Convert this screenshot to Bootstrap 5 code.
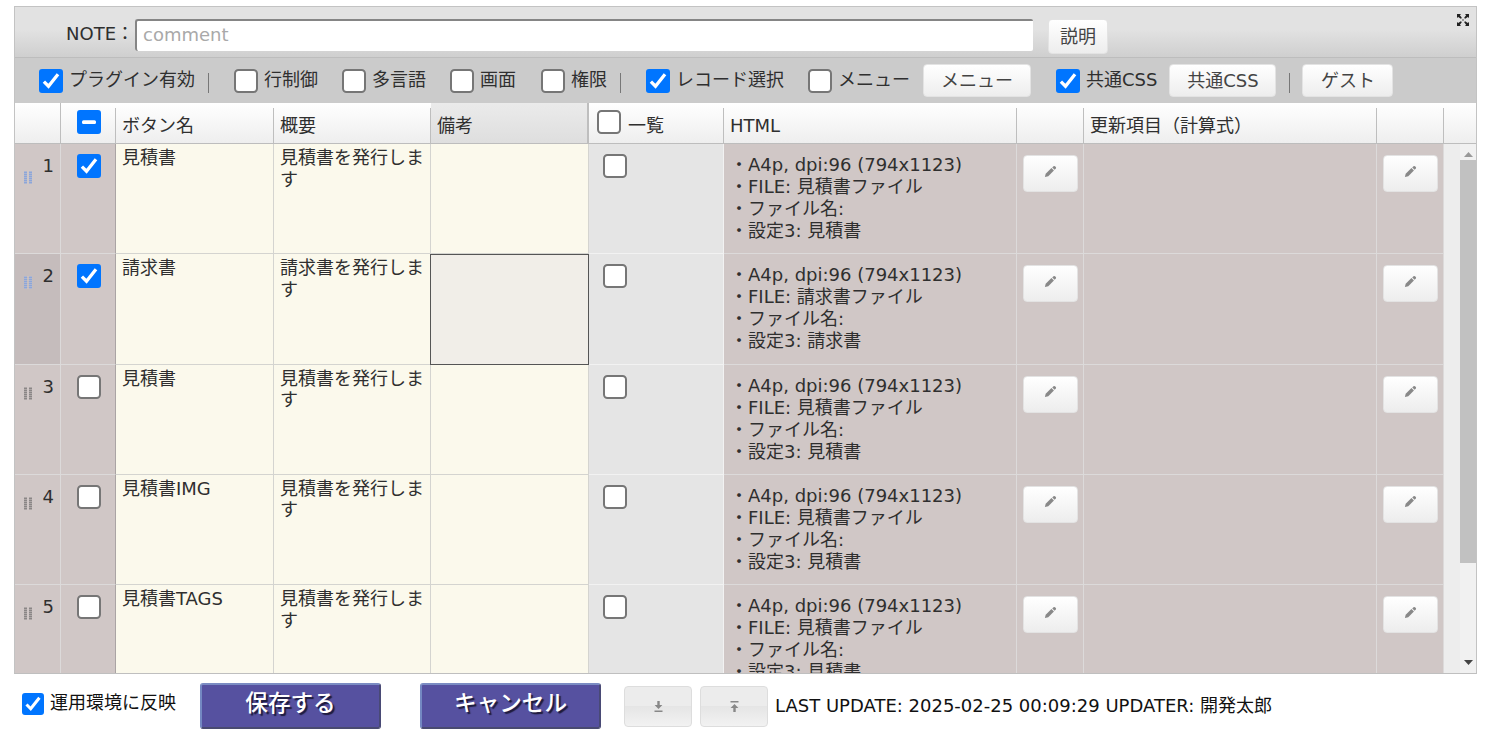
<!DOCTYPE html>
<html lang="ja">
<head>
<meta charset="utf-8">
<meta name="viewport" content="width=device-width, initial-scale=1">
<title>ボタン設定</title>
<link href="https://cdn.jsdelivr.net/npm/bootstrap@5.3.0/dist/css/bootstrap.min.css" rel="stylesheet">
<style>
  body { font-family: "DejaVu Sans", "Noto Sans CJK JP", sans-serif; font-size: 18px; line-height: 22px; color: #2f2f2f; overflow: hidden; background: #fff; }
  .panel { margin: 6px 0 0 14px; width: 1463px; height: 668px; border: 1px solid #c3c3c3; border-bottom: 2px solid #bfbfbf; }
  .panel, .panel * { box-sizing: border-box; }
  .note-bar { height: 51px; background: linear-gradient(#e2e2e2 0, #e2e2e2 45%, #cfcfcf 100%); border-bottom: 1px solid #bdbdbd; padding-left: 51px; }
  .note-label { width: 69px; white-space: nowrap; }
  .note-input { width: 898px; height: 32px; margin-top: 12px; padding: 0 6px 3px; font-size: 18px; border: 0; border-top: 2px solid #858585; border-left: 2px solid #858585; border-radius: 3px 2px 2px 3px; background: #fff; }
  .note-input::placeholder { color: #a9a9a9; opacity: 1; }
  .soft-btn { height: 33px; padding: 0; font-size: 18px; line-height: 22px; color: #444; border: 1px solid #e3e3e3; border-radius: 4px; background: linear-gradient(#fff, #ededed); }
  .expand-icon { position: absolute; right: 7px; top: 7px; }
  .opt-bar { height: 45px; padding-left: 24px; background: #cbcbcb; }
  .opt { display: flex; align-items: center; white-space: nowrap; }
  .opt span { margin-left: 6px; position: relative; top: -1px; }
  .rule { width: 1px; height: 20px; margin-top: 4px; background: #777; }
  .ms-13 { margin-left: 13px; } .ms-24 { margin-left: 24px; } .ms-25 { margin-left: 25px; } .ms-12 { margin-left: 12px; }
  .form-check-input { flex: none; margin: 0; width: 24px; height: 24px; border: 2px solid #767676; border-radius: 5px; background-color: #fff; display: block; }
  .form-check-input:checked[type=checkbox], .form-check-input:indeterminate[type=checkbox], .form-check-input.partial[type=checkbox] { background-color: #0075ff; border-color: #0075ff; border-radius: 3px; background-origin: border-box; background-size: 100% 100%; }
  .form-check-input:checked[type=checkbox] { background-image: url("data:image/svg+xml,%3csvg xmlns='http://www.w3.org/2000/svg' viewBox='0 0 24 24'%3e%3cpath d='M4.9 12.6l4.6 4.6L19 5.2' fill='none' stroke='%23fff' stroke-width='3.3'/%3e%3c/svg%3e"); }
  .form-check-input.partial[type=checkbox] { background-image: url("data:image/svg+xml,%3csvg xmlns='http://www.w3.org/2000/svg' viewBox='0 0 24 24'%3e%3crect x='5' y='10.2' width='14' height='3.8' rx='1.5' fill='%23fff'/%3e%3c/svg%3e"); }
  .cols { display: grid; grid-template-columns: 46px 55px 158px 157px 158px 135px 293px 67px 293px 67px; }
  .head { height: 41px; background: linear-gradient(#fff, #eee); border-bottom: 1px solid #bdbdbd; }
  .head > div { padding: 7px 0 0 6px; margin-top: 5px; border-right: 1px solid #bebebe; line-height: 22px; white-space: nowrap; height: 35px; }
  .head > .picked { margin-top: 0; padding-top: 12px; height: 40px; border-right: 2px solid #bebebe; background: linear-gradient(#ebebeb, #dedede); }
  .head > .lead-in { margin-top: 0; height: 40px; }
  .grid-body { height: 529px; overflow: hidden; }
  .rec { height: 110.25px; }
  .rec > div { border-right: 1px solid #dcdada; border-bottom: 1px solid #dcdada; background: #d0c7c6; }
  .rec > .txt { background: #fbf9ec; padding: 3px 5px 0 6px; line-height: 21.5px; border-color: #d4d4d0; }
  .rec > .mark-col { border-right: 1px solid #aaa4a4; padding: 10px 0 0 16px; }
  .rec > .list-col { background: #e5e5e5; padding: 10px 0 0 14px; border-color: #f2f2f2; }
  .rec > .desc { padding: 10px 0 0 6px; white-space: nowrap; }
  .rec > .num { padding: 11px 6px 0 9px; }
  .rec > .num.now { background: #c5bcbc; }
  .rec > .active-cell { background: #f1eee8; border: 1px solid #555; margin-left: -1px; }
  .grip { width: 8px; height: 13px; margin-top: 11px; color: #8a8686; background: repeating-linear-gradient(#d0c7c680 0 1px, transparent 1px 2px), linear-gradient(90deg, currentColor 0 3px, transparent 3px 5px, currentColor 5px 8px); }
  .grip.on { color: #8ca6da; }
  .edit-btn { display: flex; align-items: center; justify-content: center; width: 55px; height: 37px; margin: 11px 0 0 6px; padding: 0 0 5px; border: 1px solid #e3e3e3; border-radius: 4px; background: linear-gradient(#fff, #ededed); color: #888; }
  .gutter { width: 17px; background: #ededed; }
  .scroller { width: 17px; background: #f1f1f1; }
  .thumb { width: 16px; height: 403px; margin-top: 3px; background: #c1c1c1; }
  .foot { padding: 9px 0 0 22px; color: #111; white-space: nowrap; }
  .foot .form-check-input { width: 22px; height: 22px; }
  .main-btn { width: 181px; height: 46px; padding: 0 0 4px; border-radius: 3px; border: 2px solid; border-color: #7b8cc3 #494a75 #494a70 #7488c2; background: #5651a0; color: #fff; font-size: 22.6px; font-weight: 500; text-shadow: 2px 2px 1px #1d1b3c; }
  .arrow-btn { width: 68px; height: 41px; padding: 0; border: 1px solid #ddd; border-radius: 4px; background: linear-gradient(#ececec 0 50%, #e5e5e5 50%, #f2f2f2); color: #888; display: flex; align-items: center; justify-content: center; }
</style>
</head>
<body>
<svg class="d-none">
  <symbol id="pencil" viewBox="0 0 14 14"><path d="M1 13l.8-3.6L8 3.3 10.7 6 4.6 12.1z" fill="currentColor"/><path d="M8.9 2.6l1.3-1.3q.8-.7 1.7.1l.8.8q.7.8 0 1.6l-1.3 1.3z" fill="currentColor"/></symbol>
</svg>

<main class="panel">
  <div class="note-bar d-flex position-relative">
    <label class="note-label pt-2 mt-2" for="note">NOTE：</label>
    <input id="note" class="note-input" placeholder="comment">
    <button class="btn soft-btn" style="width:60px;height:35px;margin:12px 0 0 15px">説明</button>
    <svg class="expand-icon" width="12" height="12" viewBox="0 0 12 12" fill="#222"><path d="M0 0h4L2.9 1.2 4.8 3.8 3.8 4.8 1.2 2.9 0 4zM12 0v4l-1.2-1.1-2.6 1.9-1-1 1.9-2.6L8 0zM0 12V8l1.2 1.1 2.6-1.9 1 1-1.9 2.6L4 12zM12 12H8l1.1-1.2-1.9-2.6 1-1 2.6 1.9L12 8z"/><path d="M4.5 4.5l3 3M7.5 4.5l-3 3" stroke="#999"/></svg>
  </div>

  <div class="opt-bar d-flex align-items-center">
    <label class="opt"><input class="form-check-input" type="checkbox" checked><span>プラグイン有効</span></label>
    <i class="rule ms-13"></i>
    <label class="opt ms-25"><input class="form-check-input" type="checkbox"><span>行制御</span></label>
    <label class="opt ms-24"><input class="form-check-input" type="checkbox"><span>多言語</span></label>
    <label class="opt ms-24"><input class="form-check-input" type="checkbox"><span>画面</span></label>
    <label class="opt ms-25"><input class="form-check-input" type="checkbox"><span>権限</span></label>
    <i class="rule ms-13"></i>
    <label class="opt ms-25"><input class="form-check-input" type="checkbox" checked><span>レコード選択</span></label>
    <label class="opt ms-24"><input class="form-check-input" type="checkbox"><span>メニュー</span></label>
    <button class="btn soft-btn ms-13" style="width:108px">メニュー</button>
    <label class="opt ms-25"><input class="form-check-input" type="checkbox" checked><span>共通CSS</span></label>
    <button class="btn soft-btn ms-12" style="width:107px">共通CSS</button>
    <i class="rule ms-13"></i>
    <button class="btn soft-btn ms-12" style="width:91px">ゲスト</button>
  </div>

  <div class="cols head">
    <div class="lead-in"></div>
    <div style="padding:2px 0 0 16px"><input class="form-check-input partial" type="checkbox"></div>
    <div>ボタン名</div><div>概要</div><div class="picked">備考</div>
    <div class="d-flex" style="padding-top:2px;padding-left:8px"><input class="form-check-input" type="checkbox"><span style="margin:5px 0 0 7px">一覧</span></div>
    <div>HTML</div><div></div><div>更新項目（計算式）</div><div></div>
  </div>

  <div class="grid-body d-flex">
    <div>
      <div class="cols rec">
        <div class="num d-flex justify-content-between"><i class="grip on mt-3"></i><span>1</span></div>
        <div class="mark-col"><input class="form-check-input" type="checkbox" checked></div>
        <div class="txt">見積書</div><div class="txt">見積書を発行します</div><div class="txt"></div>
        <div class="list-col"><input class="form-check-input" type="checkbox"></div>
        <div class="desc">・A4p, dpi:96 (794x1123)<br>・FILE: 見積書ファイル<br>・ファイル名:<br>・設定3: 見積書</div>
        <div><button class="btn edit-btn"><svg width="13" height="13"><use href="#pencil"/></svg></button></div>
        <div></div>
        <div><button class="btn edit-btn"><svg width="13" height="13"><use href="#pencil"/></svg></button></div>
      </div>
      <div class="cols rec">
        <div class="num now d-flex justify-content-between"><i class="grip on"></i><span>2</span></div>
        <div class="mark-col"><input class="form-check-input" type="checkbox" checked></div>
        <div class="txt">請求書</div><div class="txt">請求書を発行します</div><div class="txt active-cell"></div>
        <div class="list-col"><input class="form-check-input" type="checkbox"></div>
        <div class="desc">・A4p, dpi:96 (794x1123)<br>・FILE: 請求書ファイル<br>・ファイル名:<br>・設定3: 請求書</div>
        <div><button class="btn edit-btn"><svg width="13" height="13"><use href="#pencil"/></svg></button></div>
        <div></div>
        <div><button class="btn edit-btn"><svg width="13" height="13"><use href="#pencil"/></svg></button></div>
      </div>
      <div class="cols rec">
        <div class="num d-flex justify-content-between"><i class="grip"></i><span>3</span></div>
        <div class="mark-col"><input class="form-check-input" type="checkbox"></div>
        <div class="txt">見積書</div><div class="txt">見積書を発行します</div><div class="txt"></div>
        <div class="list-col"><input class="form-check-input" type="checkbox"></div>
        <div class="desc">・A4p, dpi:96 (794x1123)<br>・FILE: 見積書ファイル<br>・ファイル名:<br>・設定3: 見積書</div>
        <div><button class="btn edit-btn"><svg width="13" height="13"><use href="#pencil"/></svg></button></div>
        <div></div>
        <div><button class="btn edit-btn"><svg width="13" height="13"><use href="#pencil"/></svg></button></div>
      </div>
      <div class="cols rec">
        <div class="num d-flex justify-content-between"><i class="grip"></i><span>4</span></div>
        <div class="mark-col"><input class="form-check-input" type="checkbox"></div>
        <div class="txt">見積書IMG</div><div class="txt">見積書を発行します</div><div class="txt"></div>
        <div class="list-col"><input class="form-check-input" type="checkbox"></div>
        <div class="desc">・A4p, dpi:96 (794x1123)<br>・FILE: 見積書ファイル<br>・ファイル名:<br>・設定3: 見積書</div>
        <div><button class="btn edit-btn"><svg width="13" height="13"><use href="#pencil"/></svg></button></div>
        <div></div>
        <div><button class="btn edit-btn"><svg width="13" height="13"><use href="#pencil"/></svg></button></div>
      </div>
      <div class="cols rec">
        <div class="num d-flex justify-content-between"><i class="grip"></i><span>5</span></div>
        <div class="mark-col"><input class="form-check-input" type="checkbox"></div>
        <div class="txt">見積書TAGS</div><div class="txt">見積書を発行します</div><div class="txt"></div>
        <div class="list-col"><input class="form-check-input" type="checkbox"></div>
        <div class="desc">・A4p, dpi:96 (794x1123)<br>・FILE: 見積書ファイル<br>・ファイル名:<br>・設定3: 見積書</div>
        <div><button class="btn edit-btn"><svg width="13" height="13"><use href="#pencil"/></svg></button></div>
        <div></div>
        <div><button class="btn edit-btn"><svg width="13" height="13"><use href="#pencil"/></svg></button></div>
      </div>
    </div>
    <div class="gutter flex-grow-1"></div>
    <div class="scroller d-flex flex-column align-items-center">
      <svg width="9" height="5" viewBox="0 0 9 5" style="margin-top:8px" class="flex-shrink-0"><path d="M0 5L4.500 0 9 5z" fill="#999"/></svg>
      <div class="thumb"></div>
      <svg width="9" height="5" viewBox="0 0 9 5" class="mt-auto mb-2 flex-shrink-0"><path d="M0 0h9L4.500 5z" fill="#444"/></svg>
    </div>
  </div>
</main>

<footer class="foot d-flex align-items-start">
  <label class="opt" style="padding-top:10px;width:178px"><input class="form-check-input" type="checkbox" checked><span>運用環境に反映</span></label>
  <button class="btn main-btn">保存する</button>
  <button class="btn main-btn" style="margin-left:39px">キャンセル</button>
  <button class="btn arrow-btn" style="margin:3px 0 0 23px"><svg width="9" height="11" viewBox="0 0 9 11" fill="currentColor"><path d="M3.300 0h2.400v4h2.700L4.500 8 .6 4h2.700zM.5 9.500h8v1.500h-8z"/></svg></button>
  <button class="btn arrow-btn" style="margin:3px 0 0 8px"><svg width="9" height="11" viewBox="0 0 9 11" fill="currentColor"><path d="M.5 0h8v1.500h-8zM4.500 3l3.900 4H5.700v4H3.300V7H.6z"/></svg></button>
  <span style="margin:12px 0 0 7px">LAST UPDATE: 2025-02-25 00:09:29 UPDATER: 開発太郎</span>
</footer>
<script src="https://cdn.jsdelivr.net/npm/bootstrap@5.3.0/dist/js/bootstrap.bundle.min.js"></script>
</body>
</html>
